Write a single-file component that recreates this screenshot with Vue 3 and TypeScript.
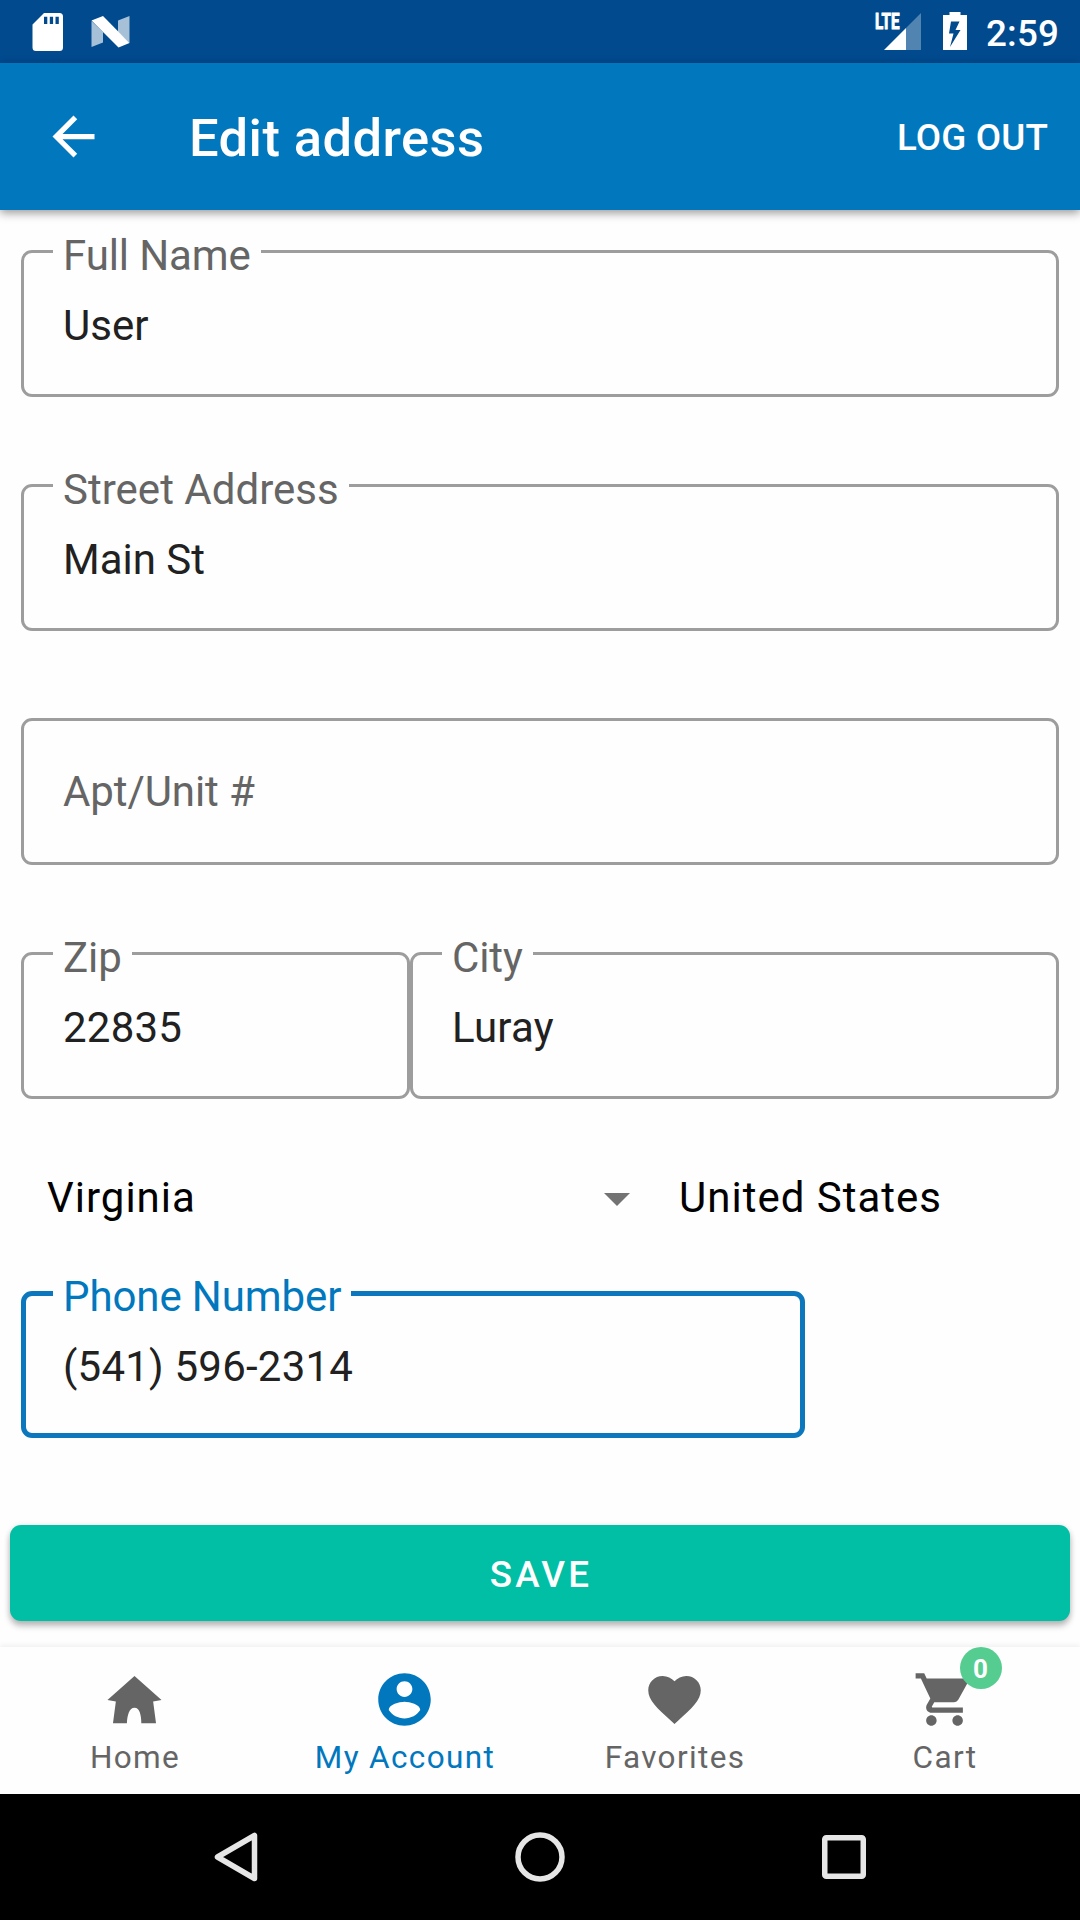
<script setup lang="ts">
import { ref } from 'vue'

interface Tab {
  id: string
  label: string
  path: string
  badge?: number
}

const fullName = ref('User')
const street = ref('Main St')
const zip = ref('22835')
const city = ref('Luray')
const region = ref('Virginia')
const country = ref('United States')
const phone = ref('(541) 596-2314')
const activeTab = ref('account')

const tabs: Tab[] = [
  {
    id: 'home',
    label: 'Home',
    path: 'M12 3.05L22.3 12.2L19.1 12.75L20.2 21H14.6C14.6 18 14 15.1 12 15.1S9.2 18 9.1 21H3.8L4.9 12.75L1.7 12.2Z',
  },
  {
    id: 'account',
    label: 'My Account',
    path: 'M12 2C6.48 2 2 6.48 2 12s4.48 10 10 10 10-4.48 10-10S17.52 2 12 2zm0 3c1.66 0 3 1.34 3 3s-1.34 3-3 3-3-1.34-3-3 1.34-3 3-3zm0 14.2c-2.5 0-4.71-1.28-6-3.22.03-1.99 4-3.08 6-3.08 1.99 0 5.97 1.09 6 3.08-1.29 1.94-3.5 3.22-6 3.22z',
  },
  {
    id: 'favorites',
    label: 'Favorites',
    path: 'M12 21.35l-1.45-1.32C5.4 15.36 2 12.28 2 8.5 2 5.42 4.42 3 7.5 3c1.74 0 3.41.81 4.5 2.09C13.09 3.81 14.76 3 16.5 3 19.58 3 22 5.42 22 8.5c0 3.78-3.4 6.86-8.55 11.54L12 21.35z',
  },
  {
    id: 'cart',
    label: 'Cart',
    path: 'M7 18c-1.1 0-1.99.9-1.99 2S5.9 22 7 22s2-.9 2-2-.9-2-2-2zM1 2v2h2l3.6 7.59-1.35 2.45c-.16.28-.25.61-.25.96 0 1.1.9 2 2 2h12v-2H7.42c-.14 0-.25-.11-.25-.25l.03-.12.9-1.63h7.45c.75 0 1.41-.41 1.75-1.03l3.58-6.49c.08-.14.12-.31.12-.48 0-.55-.45-1-1-1H5.21l-.94-2H1zm16 16c-1.1 0-1.99.9-1.99 2s.89 2 1.99 2 2-.9 2-2-.9-2-2-2z',
    badge: 0,
  },
]
</script>

<template>
  <div class="screen">
    <div class="status">
      <svg class="sd" width="32" height="40" viewBox="0 0 32 40">
        <path
          fill="#fff"
          fill-rule="evenodd"
          d="M12 1H27.500Q31 1 31 4.500V35.500Q31 39 27.500 39H4Q.5 39 .5 35.500V12.500ZM12 4.800V12H15.300V4.800ZM17.800 4.800V12H21.100V4.800ZM23.500 4.800V12H26.800V4.800Z"
        />
      </svg>
      <svg class="nlogo" width="40" height="34" viewBox="0 0 40 34">
        <path fill="#fff" fill-opacity=".65" d="M.5 6V32L12 27.500V17ZM38.500 1L27 5.500V17L38.500 28Z" />
        <path fill="#fff" d="M.5 5.500L12 1L38.500 28L27.500 32.500Z" />
      </svg>
      <span class="spacer"></span>
      <svg class="signal" width="48" height="40" viewBox="0 0 48 40">
        <path fill="#fff" fill-opacity=".32" d="M46 1V38H31V16Z" />
        <path fill="#fff" d="M31 16V38H9Z" />
        <text x="0" y="17" textLength="24.500" lengthAdjust="spacingAndGlyphs" class="lte">LTE</text>
      </svg>
      <svg class="battery" width="24" height="38" viewBox="0 0 24 38">
        <path
          fill="#fff"
          fill-rule="evenodd"
          d="M6.500 0H17.500V3H24V38H0V3H6.500ZM8 9.500L6 21.500H10.500L7 35L17.500 18H12.500L16.500 9.500Z"
        />
      </svg>
      <span class="time">2:59</span>
    </div>

    <header class="toolbar">
      <svg class="back" width="63" height="63" viewBox="0 0 24 24">
        <path fill="#fff" d="M20 11H7.830l5.590-5.590L12 4l-8 8 8 8 1.410-1.410L7.830 13H20v-2z" />
      </svg>
      <h1>Edit address</h1>
      <span class="spacer"></span>
      <span class="logout">LOG OUT</span>
    </header>

    <main class="form">
      <div class="field">
        <label>Full Name</label>
        <span class="value">{{ fullName }}</span>
      </div>
      <div class="field">
        <label class="wide">Street Address</label>
        <span class="value">{{ street }}</span>
      </div>
      <div class="field empty">
        <span class="value hint">Apt/Unit #</span>
      </div>
      <div class="row">
        <div class="field zip">
          <label>Zip</label>
          <span class="value digits">{{ zip }}</span>
        </div>
        <div class="field city">
          <label>City</label>
          <span class="value digits">{{ city }}</span>
        </div>
      </div>
      <div class="selects">
        <div class="select">
          <span>{{ region }}</span>
          <svg class="caret" width="26" height="13" viewBox="0 0 26 13"><path fill="#737373" d="M0 0H26L13 13Z" /></svg>
        </div>
        <span class="country">{{ country }}</span>
      </div>
      <div class="field phone">
        <label>Phone Number</label>
        <span class="value digits">{{ phone }}</span>
      </div>
    </main>
    <div class="save">SAVE</div>

    <nav class="tabs">
      <div v-for="tab in tabs" :key="tab.id" class="tab" :class="{ active: tab.id === activeTab }">
        <div class="icon">
          <svg width="63" height="63" viewBox="0 0 24 24"><path fill="currentColor" :d="tab.path" /></svg>
          <span v-if="tab.badge !== undefined" class="badge">{{ tab.badge }}</span>
        </div>
        <span class="tab-label">{{ tab.label }}</span>
      </div>
    </nav>

    <div class="system">
      <svg width="54" height="54" viewBox="0 0 54 54">
        <path d="M45.500 5.500V48.500L8.500 27Z" />
      </svg>
      <svg width="54" height="54" viewBox="0 0 54 54">
        <circle cx="27" cy="27" r="22" />
      </svg>
      <svg width="54" height="54" viewBox="0 0 54 54">
        <rect x="7.750" y="7.750" width="38.500" height="38.500" rx="1.500" />
      </svg>
    </div>
  </div>
</template>

<style>
body {
  background: #fefefe;
}
</style>

<style scoped>
.screen {
  width: 1080px;
  height: 1920px;
  display: flex;
  flex-direction: column;
  overflow: hidden;
  background: #fefefe;
  font-family: Roboto, sans-serif;
  font-size: 42px;
  line-height: 49px;
  white-space: nowrap;
}
svg {
  display: block;
  flex: none;
}
.spacer {
  flex: 1;
}
.status {
  height: 63px;
  flex: none;
  box-sizing: border-box;
  display: flex;
  align-items: flex-start;
  padding: 12px 21px 0 32px;
  background: #014a8e;
  color: #fff;
}
.nlogo {
  margin: 3px 0 0 27px;
}
.signal {
  overflow: visible;
}
.lte {
  fill: #fff;
  stroke: #fff;
  stroke-width: 1px;
  font-size: 22.500px;
  font-weight: 700;
}
.battery {
  margin-left: 20px;
}
.time {
  margin-left: 19px;
  font-size: 36.750px;
  font-weight: 500;
  line-height: 43px;
  letter-spacing: 0.150px;
}
.toolbar {
  height: 147px;
  flex: none;
  box-sizing: border-box;
  display: flex;
  align-items: center;
  padding: 0 32px 0 42px;
  background: #0177be;
  color: #fff;
  box-shadow: 0 3px 9px rgba(0, 0, 0, 0.4);
  z-index: 1;
}
h1 {
  margin: 3px 0 0 84px;
  font-size: 52.500px;
  line-height: 62px;
  font-weight: 500;
  letter-spacing: 0.420px;
}
.logout {
  margin-top: 2px;
  font-size: 36.750px;
  font-weight: 500;
  line-height: 43px;
  letter-spacing: 0.150px;
}
.form {
  flex: none;
  display: flex;
  flex-direction: column;
  padding: 40px 21px 0;
}
.field {
  position: relative;
  box-sizing: border-box;
  height: 147px;
  margin-bottom: 87px;
  padding: 48px 39px 0;
  border: 3px solid #9d9d9d;
  border-radius: 11px;
}
.field label {
  position: absolute;
  left: 29px;
  top: -22px;
  padding: 0 10px;
  background: #fefefe;
  color: #656565;
  letter-spacing: -0.100px;
}
.field .wide {
  letter-spacing: 0.020px;
}
.value {
  display: block;
  color: #212121;
}
.digits {
  letter-spacing: 0.220px;
}
.empty {
  padding-top: 46px;
}
.hint {
  color: #656565;
  letter-spacing: -0.100px;
}
.row {
  display: flex;
}
.zip {
  width: 389px;
}
.city {
  flex: 1;
}
.selects {
  display: flex;
  align-items: center;
  height: 49px;
  margin: -13px 0 69px;
  padding-left: 26px;
  color: #000;
  letter-spacing: 1px;
}
.select {
  width: 583px;
  flex: none;
  display: flex;
  justify-content: space-between;
  align-items: center;
}
.caret {
  margin-top: 4px;
}
.country {
  margin-left: 49px;
}
.phone {
  width: 784px;
  border: 5px solid #0d77bd;
  padding: 46px 37px 0;
}
.phone label {
  left: 27px;
  top: -24px;
  color: #0177be;
}
.save {
  height: 96px;
  box-sizing: border-box;
  flex: none;
  margin: 0 10px 26px;
  padding-left: 2px;
  border-radius: 11px;
  background: #00bfa5;
  box-shadow: 0 5px 6px rgba(0, 0, 0, 0.24), 0 1px 6px rgba(0, 0, 0, 0.12);
  color: #fff;
  font-size: 36.750px;
  font-weight: 500;
  line-height: 100px;
  letter-spacing: 3.200px;
  text-align: center;
}
.tabs {
  height: 147px;
  flex: none;
  display: flex;
  background: #fefefe;
  box-shadow: 0 -2px 5px rgba(0, 0, 0, 0.06);
}
.tab {
  width: 270px;
  box-sizing: border-box;
  padding-top: 21px;
  display: flex;
  flex-direction: column;
  align-items: center;
  color: #656565;
}
.active {
  color: #0177be;
}
.icon {
  position: relative;
  margin-right: 2px;
}
.badge {
  position: absolute;
  left: 47px;
  top: -21px;
  width: 42px;
  height: 42px;
  border-radius: 50%;
  background: #55cd90;
  color: #fff;
  font-size: 26px;
  font-weight: 700;
  line-height: 44px;
  text-align: center;
}
.tab-label {
  margin-top: 8px;
  font-size: 31.500px;
  line-height: 37px;
  letter-spacing: 1.360px;
}
.system {
  flex: 1;
  display: flex;
  justify-content: center;
  align-items: center;
  gap: 250px;
  background: #000;
}
.system svg {
  fill: none;
  stroke: #e6e6e6;
  stroke-width: 5.500;
  stroke-linejoin: round;
}
</style>
